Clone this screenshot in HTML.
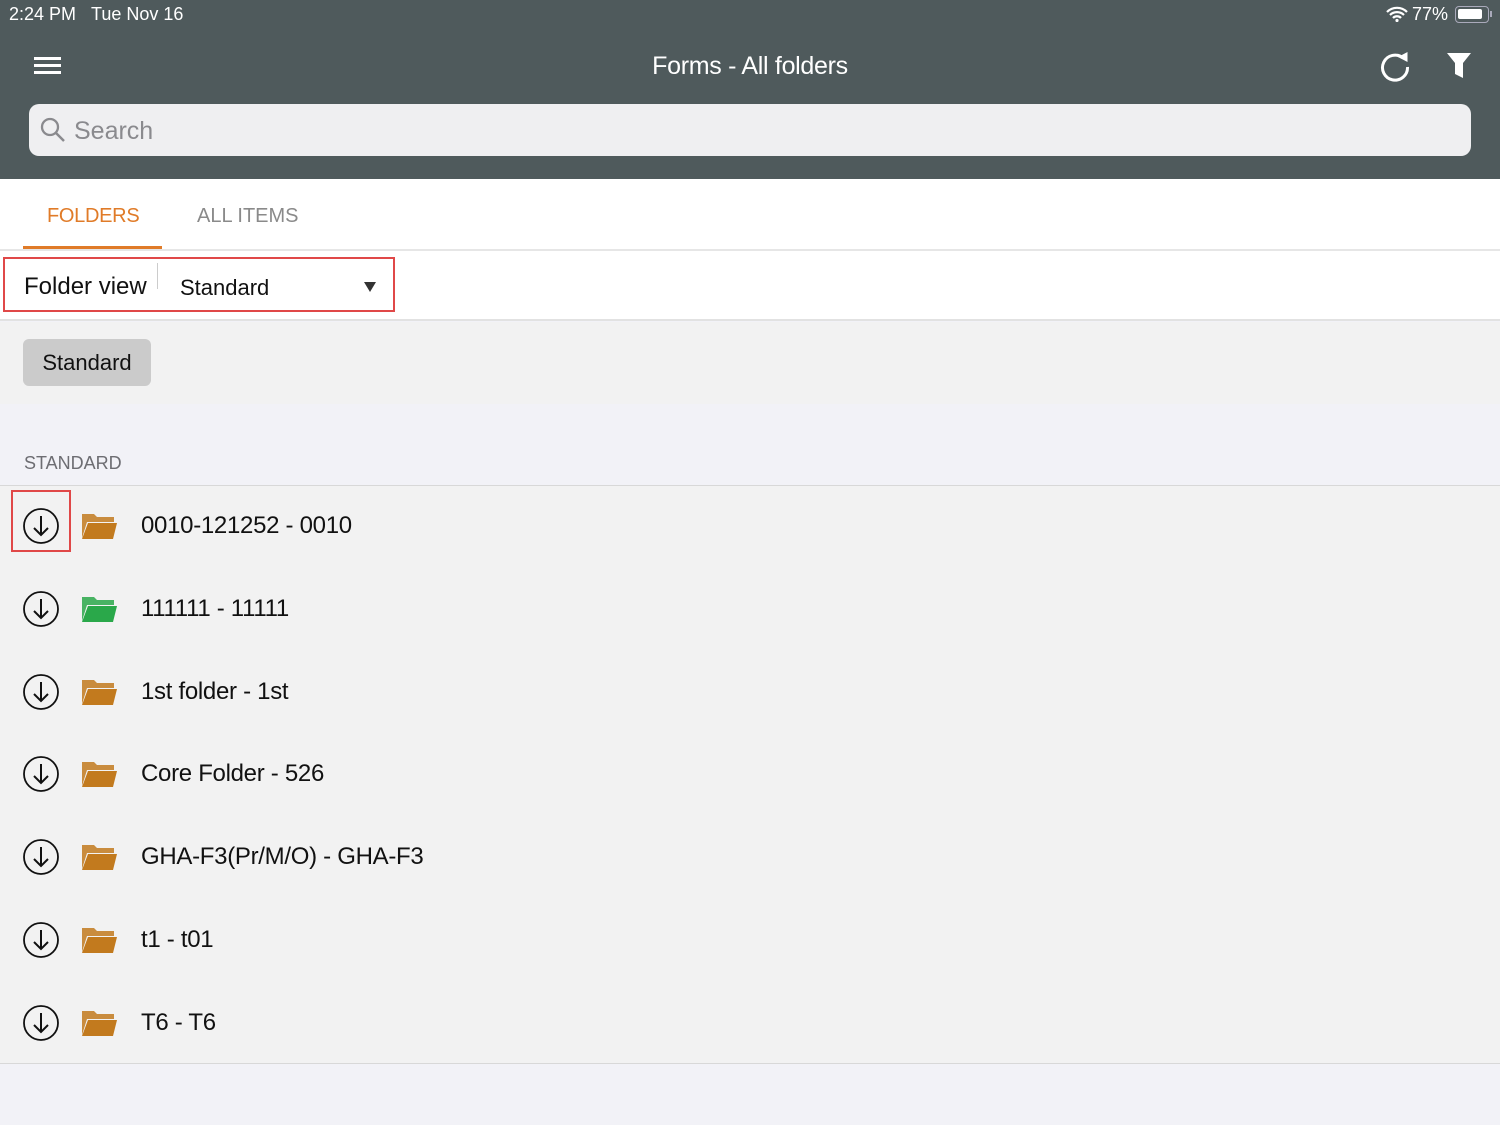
<!DOCTYPE html>
<html><head><style>
*{margin:0;padding:0;box-sizing:border-box}
body{width:1500px;height:1125px;overflow:hidden;font-family:"Liberation Sans",sans-serif;background:#f2f2f7;position:relative}
.a{position:absolute}
</style></head><body>
<div class="a" style="left:0;top:0;width:1500px;height:179px;background:#4f5a5c"></div>
<div class="a" style="left:9px;top:4px;color:#fff;font-size:18px">2:24 PM&nbsp;&nbsp;&nbsp;Tue Nov 16</div>
<svg class="a" style="left:1386px;top:6px" width="22" height="16" viewBox="0 0 22 16"><path d="M1 6a14 14 0 0 1 20 0M4 9a10 10 0 0 1 14 0M7 12a5.5 5.5 0 0 1 8 0" stroke="#fff" stroke-width="2.2" fill="none"/><circle cx="11" cy="14.5" r="1.6" fill="#fff"/></svg>
<div class="a" style="left:1412px;top:4px;color:#fff;font-size:18px">77%</div>
<div class="a" style="left:1455px;top:6px;width:34px;height:17px;border:1.5px solid #aab;border-radius:4px"><div style="margin:2px;width:24px;height:10px;background:#fff;border-radius:2px"></div></div>
<div class="a" style="left:1490px;top:11px;width:2px;height:6px;background:#aab"></div>
<div class="a" style="left:34px;top:57px;width:27px;height:3px;background:#fff;box-shadow:0 7px 0 #fff,0 14px 0 #fff"></div>
<div class="a" style="left:0;top:52px;width:1500px;text-align:center;color:#fff;font-size:25px;letter-spacing:-0.3px">Forms - All folders</div>
<svg class="a" style="left:1378px;top:50px" width="34" height="34" viewBox="0 0 34 34"><path d="M25 8A12.5 12.5 0 1 0 29.5 17" stroke="#fff" stroke-width="3" fill="none"/><path d="M20 7L29.5 2V12Z" fill="#fff"/></svg>
<svg class="a" style="left:1447px;top:53px" width="24" height="25" viewBox="0 0 24 25"><path d="M0 0H24L16 10V25L8 21V10Z" fill="#fff"/></svg>
<div class="a" style="left:29px;top:104px;width:1442px;height:52px;background:#efeff1;border-radius:10px"></div>
<svg class="a" style="left:40px;top:117px" width="26" height="26" viewBox="0 0 26 26"><circle cx="10" cy="10" r="8" stroke="#8a8a8e" stroke-width="2.3" fill="none"/><path d="M16 16L24 24" stroke="#8a8a8e" stroke-width="2.5"/></svg>
<div class="a" style="left:74px;top:117px;color:#8a8a8e;font-size:25px">Search</div>
<div class="a" style="left:0;top:179px;width:1500px;height:142px;background:#fff;border-bottom:2px solid #e2e2e2"></div>
<div class="a" style="left:0;top:249px;width:1500px;height:2px;background:#e6e6e6"></div>
<div class="a" style="left:47px;top:205px;color:#e07b28;font-size:20px;letter-spacing:-0.3px">FOLDERS</div>
<div class="a" style="left:23px;top:246px;width:139px;height:3px;background:#e07b28"></div>
<div class="a" style="left:197px;top:205px;color:#8a8a8a;font-size:20px">ALL ITEMS</div>
<div class="a" style="left:3px;top:257px;width:392px;height:55px;border:2.5px solid #e04848"></div>
<div class="a" style="left:24px;top:273px;color:#111;font-size:24px">Folder view</div>
<div class="a" style="left:157px;top:263px;width:1px;height:26px;background:#ccc"></div>
<div class="a" style="left:180px;top:275px;color:#111;font-size:22px">Standard</div>
<div class="a" style="left:364px;top:282px;width:0;height:0;border-left:6px solid transparent;border-right:6px solid transparent;border-top:10px solid #333"></div>
<div class="a" style="left:0;top:322px;width:1500px;height:82px;background:#f2f2f2"></div>
<div class="a" style="left:23px;top:339px;width:128px;height:47px;background:#cbcbcb;border-radius:6px;color:#111;font-size:22px;text-align:center;line-height:47px">Standard</div>
<div class="a" style="left:24px;top:453px;color:#6d6d72;font-size:18px">STANDARD</div>
<div class="a" style="left:0;top:485px;width:1500px;height:579px;background:#f2f2f2;border-top:1px solid #d8d8d8;border-bottom:1px solid #d8d8d8"></div>
<div class="a" style="left:11px;top:490px;width:60px;height:62px;border:2.5px solid #e04848"></div>
<div id="rows"></div>
<script>
var items=["0010-121252 - 0010","111111 - 11111","1st folder - 1st","Core Folder - 526","GHA-F3(Pr/M/O) - GHA-F3","t1 - t01","T6 - T6"];
var h="";items.forEach(function(t,i){var y=526+i*82.8;var c=i==1?"#2aa84a":"#c27a1e";
h+='<svg class="a" style="left:22px;top:'+(y-19)+'px" width="38" height="38" viewBox="0 0 38 38"><circle cx="19" cy="19" r="17" stroke="#111" stroke-width="1.8" fill="none"/><path d="M19 9V28M12 21L19 28L26 21" stroke="#111" stroke-width="2" fill="none"/></svg>';
h+='<svg class="a" style="left:81px;top:'+(y-14)+'px" width="37" height="28" viewBox="0 0 37 28"><path d="M1 2H13L16 5H33V10H6L1 26Z" fill="'+c+'" opacity=".85"/><path d="M7 11H36L32 27H1Z" fill="'+c+'"/></svg>';
h+='<div class="a" style="left:141px;top:'+(y-14)+'px;font-size:24px;color:#111;letter-spacing:-0.3px">'+t+'</div>';});
document.getElementById("rows").innerHTML=h;
</script>
</body></html>
